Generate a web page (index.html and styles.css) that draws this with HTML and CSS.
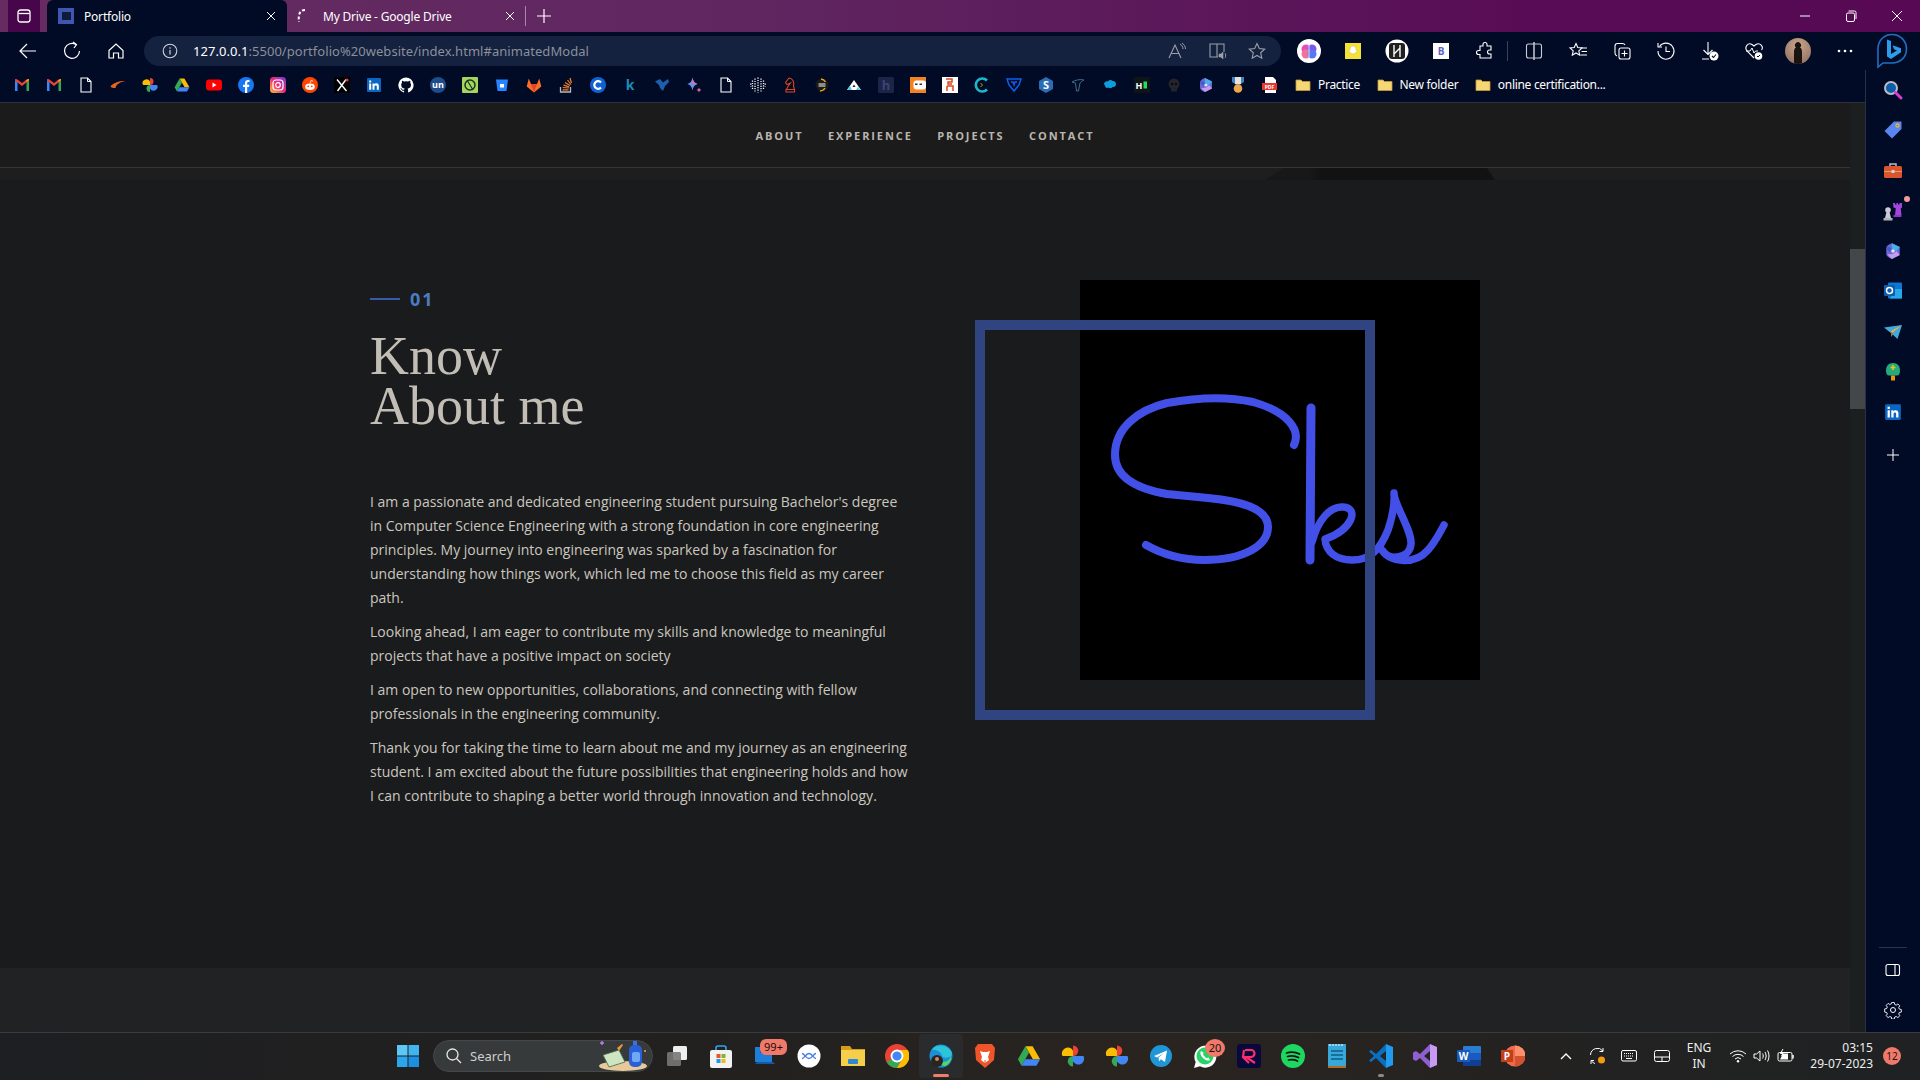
FILE: index.html
```html
<!DOCTYPE html>
<html lang="en">
    <head>
        <title>Portfolio</title>
        <meta charset="UTF-8">
        <meta name="viewport" content="width=device-width, initial-scale=1.0">
        <link rel="stylesheet" href="styles.css">
    </head>
    <body>
        <!-- shared icons -->
        <svg class="defs" width="0" height="0">
            <symbol id="gmail" viewBox="0 0 16 16"><path d="M1 14V3l2.500 2v9z" fill="#4285f4"/><path d="M15 14V3l-2.500 2v9z" fill="#34a853"/><path d="M1 3.500 8 9l7-5.500V2l-2 .2L8 6 3 2.200 1 2z" fill="#ea4335"/><path d="M12.500 5 15 3V2l-2.500 1z" fill="#fbbc04"/></symbol>
            <symbol id="file" viewBox="0 0 16 16"><path d="M3 1h6.500L13 4.500V15H3z" fill="none" stroke="#fff" stroke-width="1.100"/><path d="M9.500 1v3.500H13" fill="none" stroke="#fff"/></symbol>
            <symbol id="pinwheel" viewBox="0 0 16 16"><path d="M8 8H1a3.500 3.500 0 0 1 7-3.500z" fill="#fbbc04"/><path d="M8 8V1a3.500 3.500 0 0 1 3.500 3.500 3.500 3.500 0 0 1-3.500 3.500z" fill="#ea4335"/><path d="M8 8h7a3.500 3.500 0 0 1-7 3.500z" fill="#4285f4"/><path d="M8 8v7a3.500 3.500 0 0 1-3.500-3.500A3.500 3.500 0 0 1 8 8z" fill="#34a853"/></symbol>
            <symbol id="drive" viewBox="0 0 16 16"><path d="M5.600 1.500h4.800l5 8.700h-4.800z" fill="#fbbc04"/><path d="M5.600 1.500 .6 10.200 3 14.500l5-8.700z" fill="#34a853"/><path d="M3 14.500h10l2.400-4.300H5.500z" fill="#4285f4"/></symbol>
            <symbol id="linkedin" viewBox="0 0 16 16"><rect x="1" y="1" width="14" height="14" rx="1" fill="#0a66c2"/><path d="M3.200 6.500h2v6.300h-2zM3.200 3.400h2v2h-2zM6.500 6.500h1.900v.9c.9-1.500 4.400-1.700 4.400 1.500v3.900h-2V9.500c0-1.500-2.300-1.400-2.300.2v3.100h-2z" fill="#fff"/></symbol>
            <symbol id="hex365" viewBox="0 0 16 16"><path d="M7 1c-3 1-5 2.500-5 4.500v5c0 2 2 3.500 5 4.500l7-3.500V4.500z" fill="#6d66d8"/><path d="M7 1 14 4.500 11 8 7 6z" fill="#46b0ea"/><path d="M3 11c3 0 6 0 8-3l3 3.500L7 15z" fill="#c69be8"/><path d="M2 5.500C3 4 5 4 7 6L5 9z" fill="#3b5fc8"/><circle cx="8" cy="8" r="1.600" fill="#dfe3f8"/></symbol>
            <symbol id="folder" viewBox="0 0 16 16"><path d="M1 13.500V3h5l1.500 1.500H15v9z" fill="#f6d776" stroke="#c99a2e" stroke-width=".8"/></symbol>
            <symbol id="close" viewBox="0 0 12 12"><path d="M2 2l8 8M10 2l-8 8" stroke="#fff" stroke-width="1" fill="none"/></symbol>
        </svg>

        <div class="tabstrip">
            <div class="tab-menu"><svg width="16" height="16" viewBox="0 0 16 16"><rect x="2" y="2" width="12" height="12" rx="2.500" fill="none" stroke="#fff" stroke-width="1.300"/><path d="M2.500 5.500h11" stroke="#fff" stroke-width="1.300"/></svg></div>
            <div class="tab tab-active">
                <span class="favicon-square"></span>
                <span class="tab-title">Portfolio</span>
                <svg class="tab-close" width="12" height="12"><use href="#close"/></svg>
            </div>
            <div class="tab tab-other">
                <svg class="tab-spinner" width="16" height="16" viewBox="0 0 16 16"><path d="M13 2C8 2 6 6 7 14" fill="none" stroke="#fff" stroke-width="2" stroke-dasharray="3 2"/></svg>
                <span class="tab-title">My Drive - Google Drive</span>
                <svg class="tab-close" width="12" height="12"><use href="#close"/></svg>
            </div>
            <span class="tab-sep"></span>
            <svg class="tab-new" width="16" height="16" viewBox="0 0 16 16"><path d="M8 1v14M1 8h14" stroke="#fff" stroke-width="1.200"/></svg>
            <div class="win-controls">
                <svg width="46" height="16" viewBox="0 0 46 16"><path d="M18 8h10" stroke="#fff"/></svg>
                <svg width="46" height="16" viewBox="0 0 46 16"><rect x="18.500" y="5" width="8" height="8.500" rx="1.500" fill="none" stroke="#fff"/><path d="M20.500 3h6a1.500 1.500 0 0 1 1.500 1.500V11" fill="none" stroke="#fff"/></svg>
                <svg width="46" height="16" viewBox="0 0 46 16"><path d="M18 3l10 10M28 3 18 13" stroke="#fff"/></svg>
            </div>
        </div>

        <div class="toolbar">
            <div class="nav-btns">
                <svg width="44" height="20" viewBox="0 0 44 20"><path d="M14 10h16M21 3l-7 7 7 7" fill="none" stroke="#fff" stroke-width="1.200"/></svg>
                <svg width="44" height="20" viewBox="0 0 44 20"><path d="M26 3.500A7.500 7.500 0 1 0 29.500 10" fill="none" stroke="#fff" stroke-width="1.200"/><path d="M23 1l3.500 2.700L24 7" fill="none" stroke="#fff" stroke-width="1.200"/></svg>
                <svg width="44" height="20" viewBox="0 0 44 20"><path d="M15 9.500 22 3l7 6.500V17h-4.500v-5h-5v5H15z" fill="none" stroke="#fff" stroke-width="1.200"/></svg>
            </div>
            <div class="addressbar">
                <svg class="addr-info" width="16" height="16" viewBox="0 0 16 16"><circle cx="8" cy="8" r="6.800" fill="none" stroke="#cfd3da" stroke-width="1.100"/><path d="M8 7v4.500M8 4.300v1.400" stroke="#cfd3da" stroke-width="1.200"/></svg>
                <span class="addr-url"><span class="addr-host">127.0.0.1</span>:5500/portfolio%20website/index.html#animatedModal</span>
                <svg class="addr-tool" width="40" height="20" viewBox="0 0 40 20"><path d="M12 17 18 4l6 13M14.200 12.500h7.600" fill="none" stroke="#9aa0aa" stroke-width="1.100"/><path d="M23 3c2 1 3 3 3 5M25 2c2 1.500 3.500 3.500 3.500 6" fill="none" stroke="#9aa0aa"/></svg>
                <svg class="addr-tool" width="40" height="20" viewBox="0 0 40 20"><path d="M20 3h-7v13h7V3h7v8M20 16h1" fill="none" stroke="#9aa0aa" stroke-width="1.100"/><path d="M22 13h2l2-2v7l-2-2h-2zM28 12c1 1.500 1 3 0 5" fill="#9aa0aa" stroke="#9aa0aa" stroke-width=".6"/></svg>
                <svg class="addr-tool" width="40" height="20" viewBox="0 0 40 20"><path d="M20 2.500l2.300 5 5.400.6-4 3.700 1.100 5.400-4.800-2.800-4.800 2.800 1.100-5.400-4-3.700 5.400-.6z" fill="none" stroke="#9aa0aa" stroke-width="1.100"/></svg>
            </div>
            <div class="ext-btns">
                <span class="ext"><svg width="26" height="26" viewBox="0 0 26 26"><circle cx="13" cy="13" r="12" fill="#fff"/><circle cx="10" cy="11" r="4.500" fill="#e44fb3"/><circle cx="16" cy="11" r="4.500" fill="#7a5be8"/><circle cx="10" cy="16" r="4.500" fill="#f0739c"/><circle cx="16" cy="16" r="4.500" fill="#5a78f0"/><path d="M13 6v14" stroke="#fff" stroke-width=".8"/></svg></span>
                <span class="ext"><svg width="16" height="16" viewBox="0 0 16 16"><rect width="16" height="16" fill="#f4e23a"/><path d="M8 3c2.200 0 3 1.700 3 3.500 0 1 1 1.200 1.500 1.500-.5 1-1.800.8-2 1.800-1 1.500-4 1.500-5 0-.2-1-1.500-.8-2-1.800C4 7.700 5 7.500 5 6.500 5 4.700 5.800 3 8 3z" fill="#fff" stroke="#c9b73a" stroke-width=".5"/></svg></span>
                <span class="ext"><svg width="24" height="24" viewBox="0 0 24 24"><circle cx="12" cy="12" r="11.500" fill="#fff"/><rect x="4" y="4" width="16" height="16" rx="3" fill="#202020"/><path d="M9 6v12M15 6v12M9 15l6-6" stroke="#fff" stroke-width="1.400"/></svg></span>
                <span class="ext"><svg width="16" height="16" viewBox="0 0 16 16"><rect width="16" height="16" fill="#fff"/><text x="8" y="12" class="ext-b">B</text></svg></span>
                <span class="ext"><svg width="20" height="20" viewBox="0 0 20 20"><path d="M8 3.500a2 2 0 1 1 4 0V5h4v4h-1.500a2 2 0 1 0 0 4H16v4H5v-3.500H3.500a2 2 0 1 1 0-4H5V5h3z" fill="none" stroke="#fff" stroke-width="1.100"/></svg></span>
                <span class="toolbar-sep"></span>
                <span class="ext"><svg width="20" height="20" viewBox="0 0 20 20"><rect x="2.500" y="3" width="15" height="14" rx="2" fill="none" stroke="#c9ccd2" stroke-width="1.100"/><path d="M10 1v18" stroke="#c9ccd2" stroke-width="1.500"/></svg></span>
                <span class="ext"><svg width="20" height="20" viewBox="0 0 20 20"><path d="M8 2.500l1.800 4 4.200.4-3.200 3 .9 4.300L8 12l-3.700 2.200.9-4.300L2 6.900l4.200-.4z" fill="none" stroke="#fff" stroke-width="1.100"/><path d="M13 7h6M13.500 10.500H19M12.500 14H19" stroke="#fff" stroke-width="1.100"/></svg></span>
                <span class="ext"><svg width="20" height="20" viewBox="0 0 20 20"><rect x="7" y="7" width="11" height="11" rx="2" fill="none" stroke="#fff" stroke-width="1.100"/><path d="M12.500 9.500v6M9.500 12.500h6M5 15c-1.500-.5-2-1.500-2-3V5c0-1.500 1-2.500 2.500-2.500h5c1.200 0 2 .5 2.500 1.500" fill="none" stroke="#fff" stroke-width="1.100"/></svg></span>
                <span class="ext"><svg width="20" height="20" viewBox="0 0 20 20"><path d="M3.500 5.500A8 8 0 1 1 2 10" fill="none" stroke="#fff" stroke-width="1.100"/><path d="M2 2v4h4M10 5.500V10.500H14" fill="none" stroke="#fff" stroke-width="1.100"/></svg></span>
                <span class="ext"><svg width="20" height="20" viewBox="0 0 20 20"><path d="M8 1v12M3.500 9 8 13.500 12.500 9M2 18h7" fill="none" stroke="#fff" stroke-width="1.100"/><circle cx="14" cy="15" r="4.500" fill="#fff"/><path d="M12 15l1.500 1.500L16 13.500" fill="none" stroke="#03102c" stroke-width="1.100"/></svg></span>
                <span class="ext"><svg width="20" height="20" viewBox="0 0 20 20"><path d="M10 17 3 10C0 6 4 1 8 3.500l2 1.500 2-1.500C16 1 20 6 17.500 9" fill="none" stroke="#fff" stroke-width="1.100"/><path d="M2 10h4l2-3 2 5 1.500-2H14" fill="none" stroke="#fff"/><circle cx="14.500" cy="15" r="3.800" fill="#fff"/><path d="M13 15l1 1 2-2" fill="none" stroke="#03102c"/></svg></span>
                <span class="ext"><span class="avatar"><svg width="26" height="26" viewBox="0 0 26 26"><path d="M9 26V14c0-3 1-4 2-4.500a3 3 0 1 1 4 0c1 .5 2 1.500 2 4.500v12z" fill="#1a1410"/></svg></span></span>
                <span class="ext ext-dots"><svg width="20" height="20" viewBox="0 0 20 20"><circle cx="4" cy="10" r="1.300" fill="#fff"/><circle cx="10" cy="10" r="1.300" fill="#fff"/><circle cx="16" cy="10" r="1.300" fill="#fff"/></svg></span>
            </div>
            <div class="bing-btn"><svg width="32" height="36" viewBox="0 0 32 36"><path d="M16 1.500c8 0 14.500 6 14.500 14.500S24 30 16 30H7l-5 4V16C2 7.500 8 1.500 16 1.500z" fill="none" stroke="#1f6fc4" stroke-width="1.600"/><path d="M11 6.500l4 1.500v13l6-3.500-3-1.300-1.500-4 8.500 3v4L15 26l-4-2.500z" fill="#2c9be8"/></svg></div>
        </div>

        <div class="workspace">
            <div class="main-col">
                <div class="bookmarks">
                    <span class="bm"><svg><use href="#gmail"/></svg></span>
                    <span class="bm"><svg><use href="#gmail"/></svg></span>
                    <span class="bm"><svg><use href="#file"/></svg></span>
                    <span class="bm"><svg viewBox="0 0 16 16"><path d="M.5 9C5 5 10 3.500 15.500 4 10 5 6.500 7 5.500 11 3.500 11 1 11 .5 9z" fill="#e8641b"/></svg></span>
                    <span class="bm"><svg><use href="#pinwheel"/></svg></span>
                    <span class="bm"><svg><use href="#drive"/></svg></span>
                    <span class="bm"><svg viewBox="0 0 16 16"><rect y="2.500" width="16" height="11" rx="3" fill="#f00"/><path d="M6.500 5.500v5l4-2.500z" fill="#fff"/></svg></span>
                    <span class="bm"><svg viewBox="0 0 16 16"><circle cx="8" cy="8" r="8" fill="#1877f2"/><path d="M7 16v-6H5V7.700h2V6c0-2 1.200-3 3-3l1.500.1v2h-1c-1 0-1.300.5-1.300 1.200v1.400h2.200L11 10H9.200v6z" fill="#fff"/></svg></span>
                    <span class="bm"><svg viewBox="0 0 16 16"><defs><linearGradient id="ig" x1="0" y1="1" x2="1" y2="0"><stop offset="0" stop-color="#fdc42f"/><stop offset=".5" stop-color="#ee2a7b"/><stop offset="1" stop-color="#6a3fd8"/></linearGradient></defs><rect width="16" height="16" rx="3.500" fill="url(#ig)"/><rect x="3" y="3" width="10" height="10" rx="3" fill="none" stroke="#fff" stroke-width="1.200"/><circle cx="8" cy="8" r="2.300" fill="none" stroke="#fff" stroke-width="1.200"/></svg></span>
                    <span class="bm"><svg viewBox="0 0 16 16"><circle cx="8" cy="8" r="8" fill="#ff4500"/><ellipse cx="8" cy="9.800" rx="4.800" ry="3.200" fill="#fff"/><circle cx="6.200" cy="9.300" r=".9" fill="#ff4500"/><circle cx="9.800" cy="9.300" r=".9" fill="#ff4500"/><path d="M8 6.500 9 3.500l2 .5" fill="none" stroke="#fff" stroke-width=".7"/></svg></span>
                    <span class="bm"><svg viewBox="0 0 16 16"><rect width="16" height="16" fill="#000"/><path d="M3 2.500 12.500 14M12 2.500 3.500 14" stroke="#fff" stroke-width="1.400"/><circle cx="13" cy="3" r="1.600" fill="#e33"/></svg></span>
                    <span class="bm"><svg><use href="#linkedin"/></svg></span>
                    <span class="bm"><svg viewBox="0 0 16 16"><path d="M8 .5a7.700 7.700 0 0 0-2.400 15c.4 0 .5-.2.5-.4v-1.400c-2.100.5-2.600-1-2.600-1-.3-.9-.8-1.100-.8-1.100-.7-.5 0-.5 0-.5.8 0 1.200.8 1.200.8.7 1.200 1.800.8 2.300.6 0-.5.3-.8.5-1-1.700-.2-3.500-.9-3.500-3.800 0-.8.3-1.500.8-2-.1-.2-.3-1 .1-2 0 0 .6-.2 2.100.8a7 7 0 0 1 3.800 0c1.500-1 2.100-.8 2.100-.8.4 1 .2 1.800.1 2 .5.5.8 1.200.8 2 0 2.900-1.800 3.600-3.500 3.800.3.200.6.700.6 1.400v2.100c0 .2.100.4.500.4A7.700 7.700 0 0 0 8 .5z" fill="#fff"/></svg></span>
                    <span class="bm"><svg viewBox="0 0 16 16"><circle cx="8" cy="8" r="8" fill="#1d4e89"/><text x="8" y="11" class="bm-txt bm-un">un</text></svg></span>
                    <span class="bm"><svg viewBox="0 0 16 16"><rect width="16" height="16" rx="1" fill="#a4d65e"/><circle cx="8" cy="8" r="5" fill="none" stroke="#1c3320" stroke-width="1.500"/><path d="M5 3l6 10" stroke="#1c3320" stroke-width="1.200"/></svg></span>
                    <span class="bm"><svg viewBox="0 0 16 16"><path d="M2 2.500h12L12.500 14h-9z" fill="#2684ff"/><rect x="6" y="7" width="4" height="3.500" fill="#fff"/></svg></span>
                    <span class="bm"><svg viewBox="0 0 16 16"><path d="M8 15.500 .7 9.500 2.800 1.500 5 7h6l2.200-5.500 2.100 8z" fill="#fc6d26"/><path d="M8 15.500 5 7h6z" fill="#e24329"/></svg></span>
                    <span class="bm"><svg viewBox="0 0 16 16"><path d="M2.500 10v5h10v-5" fill="none" stroke="#bcbbbb" stroke-width="1.300"/><path d="M4.500 12.800h6M4.700 10.500l6 .5M5.500 8.200l5.700 1.600M7 5.500l5 3M9.500 3l3.500 4.500M12 1l1.500 5" stroke="#f48024" stroke-width="1.200"/></svg></span>
                    <span class="bm"><svg viewBox="0 0 16 16"><circle cx="8" cy="8" r="8" fill="#0f62d6"/><path d="M11 5.500a3.800 3.800 0 1 0 0 5" fill="none" stroke="#fff" stroke-width="2.200"/></svg></span>
                    <span class="bm"><svg viewBox="0 0 16 16"><text x="8" y="12.500" class="bm-txt bm-k">k</text></svg></span>
                    <span class="bm"><svg viewBox="0 0 16 16"><path d="M1 4.500 6 2l3 3.500L14 2l1 3-4 4-2 5-3-3-1-3z" fill="#1b5fae"/></svg></span>
                    <span class="bm"><svg viewBox="0 0 16 16"><path d="M6.500 .5C7 4 8.500 6 11.500 7 8.500 8 7 10 6.500 13.500 6 10 4.500 8 1.500 7 4.500 6 6 4 6.500 .5z" fill="#6f8fe8"/><path d="M6.500 .5C7 4 8.500 6 11.500 7H6.500z" fill="#df6fb0"/><path d="M13 10.500l.8 1.700 1.700.8-1.700.8-.8 1.700-.8-1.700-1.700-.8 1.700-.8z" fill="#df6fb0"/></svg></span>
                    <span class="bm"><svg><use href="#file"/></svg></span>
                    <span class="bm"><svg viewBox="0 0 16 16"><path d="M8 .5v15M5 1.500v13M11 1.500v13M2.500 3.500v9M13.500 3.500v9M.8 6.500v3M15.200 6.500v3" stroke="#fff" stroke-width="1.300" stroke-dasharray="1.200 1.200" fill="none"/></svg></span>
                    <span class="bm"><svg viewBox="0 0 16 16"><path d="M7 1c4 .5 5.500 4 4.500 8l1 3.500h-8l1.500-3L8.500 6 5 7.500 3.500 5.500zM4 12.500h8.500V15H4z" fill="none" stroke="#d8481f" stroke-width="1.100"/></svg></span>
                    <span class="bm"><svg viewBox="0 0 16 16"><circle cx="8" cy="8" r="6.500" fill="#1a1a1a"/><path d="M7 2a6 6 0 0 1 4.500 3M11 11a6 6 0 0 1-5 3" fill="none" stroke="#e8a317" stroke-width="1.500"/><path d="M4.500 7h7M4.500 9h7" stroke="#fff"/></svg></span>
                    <span class="bm"><svg viewBox="0 0 16 16"><path d="M8 3 15 13H1z" fill="#fff"/><path d="M1 13l3-4.300L6 13zM10 13l2-3 3 3z" fill="#5ac8e0"/><path d="M6.500 10h3l-1.500-2.500z" fill="#182038"/></svg></span>
                    <span class="bm"><svg viewBox="0 0 16 16"><rect width="16" height="16" rx="1.500" fill="#1c2447"/><text x="8" y="12.500" class="bm-txt bm-h">h</text></svg></span>
                    <span class="bm"><svg viewBox="0 0 16 16"><rect width="16" height="16" fill="#f58220"/><rect x="3.500" y="3.500" width="12.500" height="9" rx="3" fill="#fff"/><rect x="5" y="6.500" width="2.500" height="1.500" fill="#333"/><rect x="9.500" y="6.500" width="2.500" height="1.500" fill="#333"/></svg></span>
                    <span class="bm"><svg viewBox="0 0 16 16"><rect width="16" height="16" fill="#fff"/><path d="M4 2h6v3H6v2h4M5 9h6v5M5 14V9" fill="none" stroke="#d8481f" stroke-width="1.500"/></svg></span>
                    <span class="bm"><svg viewBox="0 0 16 16"><path d="M13 3.500a6.500 6.500 0 1 0 0 9" fill="none" stroke="#1bb8c9" stroke-width="2.600"/><path d="M6.500 6 8.500 8l-2 2" fill="none" stroke="#e8a317" stroke-width=".9"/></svg></span>
                    <span class="bm"><svg viewBox="0 0 16 16"><path d="M1 2h14l-2 6-5 6-5-6zM5 5h2l1 3 1-3h2" fill="none" stroke="#0d5ff2" stroke-width="1.500"/></svg></span>
                    <span class="bm"><svg viewBox="0 0 16 16"><path d="M8 0 15 4v8l-7 4-7-4V4z" fill="#2a6db5"/><text x="8" y="12" class="bm-txt bm-s">S</text></svg></span>
                    <span class="bm"><svg viewBox="0 0 16 16"><path d="M2 5c3-2 8-3 12-2-2 1-3 2-4 3l-1.500 8h-2L5.500 6z" fill="none" stroke="#3d6f8f" stroke-width="1"/></svg></span>
                    <span class="bm"><svg viewBox="0 0 16 16"><path d="M6 4.500c1-2 3.500-2 4.500-.5 1.800-.5 3.500 1 3.500 3s-1.500 3.500-3.500 3c-1 1.500-3 1.500-4 .5-1.500 1-3.500 0-3.500-2-1.500-1-1-3 .3-3.500C4 4 5 4 6 4.500z" fill="#0d9dda"/></svg></span>
                    <span class="bm"><svg viewBox="0 0 16 16"><rect width="16" height="16" fill="#101418"/><text x="5" y="12" class="bm-txt bm-hh">H</text><rect x="9.500" y="4.500" width="3.500" height="7" fill="#1ee05f"/></svg></span>
                    <span class="bm"><svg viewBox="0 0 16 16"><circle cx="8" cy="7" r="5.500" fill="#23252b"/><circle cx="6" cy="7" r="1.300" fill="#0a0c12"/><circle cx="10" cy="7" r="1.300" fill="#0a0c12"/><rect x="5" y="11" width="6" height="3.500" fill="#23252b"/></svg></span>
                    <span class="bm"><svg><use href="#hex365"/></svg></span>
                    <span class="bm"><svg viewBox="0 0 16 16"><path d="M2 0h12v5L8 9 2 5z" fill="#3f7fc4"/><path d="M5 0h6v7H5z" fill="#e9e4d4"/><circle cx="8" cy="11.500" r="4.300" fill="#f0a64a"/></svg></span>
                    <span class="bm"><svg viewBox="0 0 16 16"><path d="M3 0h8l3 3v13H3z" fill="#fff"/><rect x="0" y="6" width="15" height="7" fill="#e8352e"/><text x="7.500" y="11.500" class="bm-txt bm-pdf">PDF</text></svg></span>
                    <span class="folder-item folder-first"><svg width="16" height="16"><use href="#folder"/></svg>Practice</span>
                    <span class="folder-item"><svg width="16" height="16"><use href="#folder"/></svg>New folder</span>
                    <span class="folder-item"><svg width="16" height="16"><use href="#folder"/></svg>online certification...</span>
                </div>

                <div class="viewport">
                    <div class="page">
                        <nav class="site-nav">
                            <a href="#about">ABOUT</a>
                            <a href="#experience">EXPERIENCE</a>
                            <a href="#projects">PROJECTS</a>
                            <a href="#contact">CONTACT</a>
                        </nav>
                        <div class="hero-edge"><div class="hero-shape"></div></div>
                        <section class="about" id="about">
                            <div class="about-text">
                                <div class="section-num"><span class="section-dash"></span>01</div>
                                <h2>Know<br>About me</h2>
                                <p>I am a passionate and dedicated engineering student pursuing Bachelor's degree in Computer Science Engineering with a strong foundation in core engineering principles. My journey into engineering was sparked by a fascination for understanding how things work, which led me to choose this field as my career path.</p>
                                <p>Looking ahead, I am eager to contribute my skills and knowledge to meaningful projects that have a positive impact on society</p>
                                <p>I am open to new opportunities, collaborations, and connecting with fellow professionals in the engineering community.</p>
                                <p>Thank you for taking the time to learn about me and my journey as an engineering student. I am excited about the future possibilities that engineering holds and how I can contribute to shaping a better world through innovation and technology.</p>
                            </div>
                            <div class="about-pic">
                                <svg class="logo" width="400" height="400" viewBox="0 0 400 400"><path d="M214 165C221 150 208 132 173 122 150 117 120 117 87 123 58 130 35 148 35 175 35 198 58 209 87 214L128 218C160 221 188 228 188 247 188 265 165 280 124 280 100 280 82 274 66 265" fill="none" stroke="#4350e8" stroke-width="8" stroke-linecap="round"/><path d="M231 128 230 280" fill="none" stroke="#4350e8" stroke-width="9" stroke-linecap="round"/><path d="M232 262C238 240 250 226 263 227 280 228 272 250 245 259 246 272 256 280 272 280 290 280 300 270 308 250 312 238 315 225 314 213 314 225 332 250 331 264 330 278 310 282 302 270 310 283 335 285 348 270 356 261 360 252 364 245" fill="none" stroke="#4350e8" stroke-width="7.500" stroke-linecap="round" stroke-linejoin="round"/></svg>
                                <div class="about-frame"></div>
                            </div>
                        </section>
                        <div class="page-rest"></div>
                    </div>
                    <div class="scrollbar"><div class="scroll-thumb"></div></div>
                </div>
            </div>

            <aside class="sidebar">
                <span class="side-btn"><svg width="20" height="20" viewBox="0 0 20 20"><circle cx="8" cy="8" r="6" fill="#0b5cab" stroke="#b9bdc4" stroke-width="2"/><path d="M12.500 12.500 18 18" stroke="#d63bd8" stroke-width="3" stroke-linecap="round"/></svg></span>
                <span class="side-btn"><svg width="20" height="20" viewBox="0 0 20 20"><path d="M11 1.500h7.500V9L9 18.500 1.500 11z" fill="#5a84f0"/><circle cx="14.500" cy="5.500" r="1.600" fill="none" stroke="#f5c518" stroke-width="1.100"/></svg></span>
                <span class="side-btn"><svg width="20" height="20" viewBox="0 0 20 20"><path d="M7 5V3h6v2" fill="none" stroke="#b9bdc4" stroke-width="1.500"/><rect x="1" y="5" width="18" height="12" rx="1.500" fill="#d8552d"/><path d="M1 10.500h18" stroke="#f0976a"/><rect x="8.500" y="9" width="3" height="3" fill="#cfd3da"/></svg></span>
                <span class="side-btn side-chess"><svg width="22" height="20" viewBox="0 0 22 20"><circle cx="6" cy="9" r="2.800" fill="#c9ccd2"/><path d="M4.500 11h3L9 17H3z" fill="#c9ccd2"/><path d="M1.500 17h9v2.500h-9z" fill="#aeb2ba"/><path d="M11 2h2v1.500h1.500V2h1.500v1.500h1.500V2H20v4.500l-1.300.8.800 6.700h-6.500l.8-6.700L11.500 6.500z" fill="#a644e0"/><path d="M11.500 14h8v2h-8z" fill="#8d35c8"/></svg><span class="side-dot"></span></span>
                <span class="side-btn"><svg width="18" height="18"><use href="#hex365"/></svg></span>
                <span class="side-btn"><svg width="20" height="20" viewBox="0 0 20 20"><rect x="5" y="1.500" width="14" height="16" rx="1" fill="#0a78d4"/><path d="M12 8h7v9.500h-12z" fill="#28a8ea"/><rect x="1" y="4" width="11" height="11" rx="1" fill="#0f5cab"/><circle cx="6.500" cy="9.500" r="3" fill="none" stroke="#fff" stroke-width="1.500"/></svg></span>
                <span class="side-btn"><svg width="20" height="20" viewBox="0 0 20 20"><path d="M1 5.500 19 3 14.500 17 8.500 11.500z" fill="#41a9e0"/><path d="M8.500 11.500 19 3 8 9z" fill="#f2b33a"/><path d="M8 9v6l2-2.500z" fill="#b8761c"/></svg></span>
                <span class="side-btn"><svg width="20" height="20" viewBox="0 0 20 20"><path d="M10 1c4.500 0 7 3 7 7.500 0 3-1 5-3 5H6c-2 0-3-2-3-5C3 4 5.500 1 10 1z" fill="#24ab7b"/><rect x="8" y="13.500" width="4" height="5" fill="#e8950f"/><path d="M10 3v5M7.500 5.500h5" stroke="#f0bf1a" stroke-width="1.600"/></svg></span>
                <span class="side-btn"><svg width="18" height="18"><use href="#linkedin"/></svg></span>
                <span class="side-btn side-plus"><svg width="14" height="14" viewBox="0 0 14 14"><path d="M7 1v12M1 7h12" stroke="#fff" stroke-width="1"/></svg></span>
                <div class="side-bottom">
                    <span class="side-rule"></span>
                    <span class="side-btn"><svg width="16" height="14" viewBox="0 0 16 14"><rect x="1" y="1.500" width="13.500" height="11" rx="2" fill="none" stroke="#fff" stroke-width="1.100"/><path d="M10 1.500v11" stroke="#fff" stroke-width="1.100"/></svg></span>
                    <span class="side-btn"><svg width="18" height="18" viewBox="0 0 18 18"><circle cx="9" cy="9" r="2.500" fill="none" stroke="#fff"/><path d="M7.700 1.500h2.600l.4 2 1.500.6 1.700-1.100 1.900 1.900-1.100 1.700.6 1.500 2 .4v2.600l-2 .4-.6 1.500 1.100 1.700-1.900 1.900-1.700-1.100-1.500.6-.4 2H7.700l-.4-2-1.500-.6-1.700 1.100-1.900-1.900 1.100-1.700-.6-1.500-2-.4V7.900l2-.4.6-1.500L2.200 4.300l1.900-1.900 1.700 1.100 1.500-.6z" fill="none" stroke="#fff" stroke-width=".9"/></svg></span>
                </div>
            </aside>
        </div>

        <footer class="taskbar">
            <span class="start"><svg width="24" height="24" viewBox="0 0 24 24"><rect x="1" y="1" width="10.500" height="10.500" fill="#5dc8f5"/><rect x="12.500" y="1" width="10.500" height="10.500" fill="#3fb4f0"/><rect x="1" y="12.500" width="10.500" height="10.500" fill="#2ba6ec"/><rect x="12.500" y="12.500" width="10.500" height="10.500" fill="#1c8fe0"/></svg></span>
            <div class="searchbox">
                <svg width="18" height="18" viewBox="0 0 18 18"><circle cx="7.500" cy="7.500" r="5.500" fill="none" stroke="#e8e8e8" stroke-width="1.300"/><path d="M11.500 11.500 16 16" stroke="#e8e8e8" stroke-width="1.300"/></svg>
                <span class="search-label">Search</span>
                <svg class="search-art" width="50" height="32" viewBox="0 0 50 32"><ellipse cx="24" cy="26" rx="24" ry="5" fill="#e8c99a"/><path d="M4 15l16-5 6 12-16 5z" fill="#cfe4c0" stroke="#3e6a4e" stroke-width=".8"/><path d="M18 8l5-4 1 1-4 6z" fill="#e89a3a"/><rect x="30" y="5" width="13" height="22" rx="5" fill="#2a5fd8"/><rect x="33" y="12" width="8" height="10" rx="2" fill="#6fa8f5"/><rect x="34" y="1" width="4" height="4" fill="#3a72e0"/><circle cx="46" cy="11" r="1" fill="#f0b030"/><path d="M1 3h4M3 1v4" stroke="#c07be0" stroke-width="1.400"/></svg>
            </div>
            <span class="task"><svg width="24" height="24" viewBox="0 0 24 24"><rect x="8" y="2" width="14" height="14" rx="1.500" fill="#eee"/><rect x="2" y="8" width="14" height="14" rx="1.500" fill="#777" opacity=".9"/></svg></span>
            <span class="task"><svg width="24" height="26" viewBox="0 0 24 26"><path d="M7 8V5a2 2 0 0 1 2-2h6a2 2 0 0 1 2 2v3" fill="none" stroke="#2ba6ec" stroke-width="1.600"/><rect x="1" y="7" width="22" height="18" rx="2" fill="#f2f2f2"/><rect x="7.500" y="11" width="4" height="4" fill="#e8552d"/><rect x="12.500" y="11" width="4" height="4" fill="#7cb82f"/><rect x="7.500" y="16" width="4" height="4" fill="#1c9be0"/><rect x="12.500" y="16" width="4" height="4" fill="#f5b81a"/></svg></span>
            <span class="task"><svg width="26" height="24" viewBox="0 0 26 24"><rect x="3" y="3" width="17" height="15" fill="#1f7fd8"/><rect x="8" y="1" width="15" height="8" fill="#1a5fb8"/><path d="M5 18h16l2 2H3z" fill="#1259a8"/></svg><span class="badge badge-wide">99+</span></span>
            <span class="task"><svg width="24" height="24" viewBox="0 0 24 24"><circle cx="12" cy="12" r="11.500" fill="#fff"/><path d="M5 9.500c2.500 0 3.500 5 7 5s4.500-5 7-5M5 14.500c2.500 0 3.500-5 7-5s4.500 5 7 5" fill="none" stroke="#4a7fe0" stroke-width="1.400"/></svg></span>
            <span class="task"><svg width="26" height="24" viewBox="0 0 26 24"><path d="M1 2h9l2 3h13v17H1z" fill="#d89a18"/><rect x="1" y="6" width="24" height="16" fill="#f6cf4a"/><rect x="8" y="15" width="10" height="5" rx="1" fill="#2b88d8"/></svg></span>
            <span class="task"><svg width="24" height="24" viewBox="0 0 24 24"><circle cx="12" cy="12" r="12" fill="#ea4335"/><path d="M12 12 1.600 18A12 12 0 0 0 12 24l5-9z" fill="#34a853"/><path d="M12 6h10.800A12 12 0 0 1 12 24l5.200-9z" fill="#fbbc04"/><circle cx="12" cy="12" r="5.500" fill="#4285f4" stroke="#fff" stroke-width="1.800"/></svg></span>
            <span class="task task-open"><svg width="24" height="24" viewBox="0 0 24 24"><circle cx="12" cy="12" r="11.500" fill="#1c8fd8"/><path d="M3 6c3-6 14-6 19 1 1.500 3 1 6-2 6-2 1-6 1-7-1 0-4-7-7-10-6z" fill="#2bc4d8"/><path d="M22 12c1 5-3 9-6 10-2 0-5-2-4-5 2 1 8 2 10-5z" fill="#52d860"/><circle cx="8" cy="17" r="6" fill="#2a2420"/><circle cx="8" cy="15" r="2" fill="#c98a6a"/></svg><span class="task-pill"></span></span>
            <span class="task"><svg width="22" height="26" viewBox="0 0 22 26"><path d="M4 1h14l3 4-1 12-9 8-9-8L1 5z" fill="#f0542a"/><path d="M6 8l3 1h4l3-1-2 6 1 3-4 3-4-3 1-3z" fill="#fff"/><path d="M11 17v3" stroke="#f0542a"/></svg></span>
            <span class="task"><svg width="24" height="24"><use href="#drive"/></svg></span>
            <span class="task"><svg width="24" height="24"><use href="#pinwheel"/></svg></span>
            <span class="task"><svg width="24" height="24"><use href="#pinwheel"/></svg></span>
            <span class="task"><svg width="24" height="24" viewBox="0 0 24 24"><circle cx="12" cy="12" r="11" fill="#1f96d6"/><path d="M5 12 18 6.500 16 18l-4-2.800-2 2-.5-3.700L15 9l-7 4.500z" fill="#fff"/></svg></span>
            <span class="task"><svg width="26" height="26" viewBox="0 0 26 26"><path d="M2 25l1.700-6A11 11 0 1 1 8 23.300z" fill="#fff"/><circle cx="13" cy="13" r="8.500" fill="#25d366"/><path d="M9 8c-1.500 2 0 5 2 7s5 3.500 7 2l-1.500-2.500-2 .7-3.500-3.500.7-2z" fill="#fff"/></svg><span class="badge badge-num">20</span></span>
            <span class="task"><svg width="24" height="24" viewBox="0 0 24 24"><rect width="24" height="24" rx="3" fill="#08083a"/><path d="M8 6h6a3 3 0 0 1 0 7H9l9 6M7 6l-1 7 6 6" fill="none" stroke="#fa2d6e" stroke-width="2.200"/></svg></span>
            <span class="task"><svg width="24" height="24" viewBox="0 0 24 24"><circle cx="12" cy="12" r="12" fill="#1ed760"/><path d="M5.500 9c4-1.200 9-1 13 1M6.500 12.500c3.500-1 7.500-.8 11 1M7.500 16c3-.7 6-.5 9 1" fill="none" stroke="#111" stroke-width="1.700" stroke-linecap="round"/></svg></span>
            <span class="task"><svg width="20" height="26" viewBox="0 0 20 26"><rect x="1" y="1" width="18" height="24" fill="#38a8d8"/><rect x="1" y="23" width="18" height="2" fill="#b06a2a"/><path d="M4 8h12M4 12h12M4 16h12" stroke="#0d5c8a" stroke-width="1.500"/><path d="M3 1v2M6 1v2M9 1v2M12 1v2M15 1v2" stroke="#fff"/></svg></span>
            <span class="task task-run"><svg width="24" height="26" viewBox="0 0 24 26"><path d="M17 1 24 4v18l-7 3z" fill="#1f9cf0"/><path d="M17 1 7 11 2 7 0 8.500 5 13 0 17.500 2 19l5-4 10 10v-7l-6-5 6-5z" fill="#0a6fc0"/></svg><span class="task-dot"></span></span>
            <span class="task"><svg width="24" height="26" viewBox="0 0 24 26"><path d="M17 1 24 4v18l-7 3z" fill="#c79bf2"/><path d="M17 1 7 11 3 8 0 9.500v7L3 18l4-3 10 10v-7l-6-5 6-5z" fill="#8f5ed0"/></svg></span>
            <span class="task"><svg width="24" height="24" viewBox="0 0 24 24"><rect x="6" y="2" width="18" height="20" rx="1" fill="#2b7cd3"/><path d="M6 9h18v7H6z" fill="#185abd"/><rect x="6" y="16" width="18" height="6" fill="#103f91"/><rect y="6" width="13" height="12" fill="#185abd"/><text x="6.500" y="15.500" class="office-letter">W</text></svg></span>
            <span class="task"><svg width="24" height="24" viewBox="0 0 24 24"><circle cx="14" cy="12" r="10.500" fill="#ed6c47"/><path d="M14 1.500V12h10.500A10.500 10.500 0 0 0 14 1.500z" fill="#ff8f6b"/><path d="M14 12h10.500A10.500 10.500 0 0 1 14 22.500z" fill="#d35230"/><rect y="6" width="12" height="12" fill="#c43e1c"/><text x="6" y="15.500" class="office-letter">P</text></svg></span>

            <div class="tray">
                <span class="tray-btn"><svg width="14" height="10" viewBox="0 0 14 10"><path d="M2 8l5-5 5 5" fill="none" stroke="#fff" stroke-width="1.400"/></svg></span>
                <span class="tray-btn"><svg width="18" height="18" viewBox="0 0 18 18"><path d="M1.500 8A7 7 0 0 1 14 4M14 1v3.500h-3.500M6 16.500A7 7 0 0 1 2.500 14M2 17v-3.500h3" fill="none" stroke="#fff" stroke-width="1"/><circle cx="12.500" cy="13" r="3.500" fill="#f59a0c"/></svg></span>
                <span class="tray-btn"><svg width="18" height="12" viewBox="0 0 18 12"><rect x=".5" y=".5" width="15" height="10.500" rx="1.500" fill="none" stroke="#fff"/><path d="M3 3.500h10M3 6h10" stroke="#fff" stroke-dasharray="1 1"/><path d="M5 8.500h6" stroke="#fff"/></svg></span>
                <span class="tray-btn"><svg width="16" height="14" viewBox="0 0 16 14"><rect x=".5" y="1.500" width="15" height="11" rx="2" fill="none" stroke="#fff"/><path d="M.5 8h15M8 8v4.500" stroke="#fff"/></svg></span>
                <span class="tray-lang">ENG<br>IN</span>
                <span class="tray-sys"><svg width="18" height="14" viewBox="0 0 18 14"><path d="M1 5a11.500 11.500 0 0 1 16 0M3.500 7.500a8 8 0 0 1 11 0M6 10a4.300 4.300 0 0 1 6 0" fill="none" stroke="#fff" stroke-width="1"/><circle cx="9" cy="12.300" r="1.200" fill="#fff"/></svg></span>
                <span class="tray-sys"><svg width="18" height="14" viewBox="0 0 18 14"><path d="M1 5h2.500L7 2v10L3.500 9H1z" fill="none" stroke="#fff"/><path d="M9.500 4.500c1 1.500 1 3.500 0 5M12 3c1.500 2.500 1.500 5.500 0 8M14.500 1.500c2 3 2 8 0 11" fill="none" stroke="#fff"/></svg></span>
                <span class="tray-sys"><svg width="18" height="14" viewBox="0 0 18 14"><rect x="1" y="3.500" width="14" height="8.500" rx="1.500" fill="none" stroke="#fff"/><path d="M16 6v3.500" stroke="#fff" stroke-width="1.500"/><path d="M3 10.500 6 4.500l5 0v6z" fill="#fff"/><path d="M6 0 3.500 4.500H6L4.500 7" fill="none" stroke="#fff"/></svg></span>
                <span class="tray-clock">03:15<br>29-07-2023</span>
                <span class="tray-notif">12</span>
            </div>
        </footer>
    </body>
</html>
```

FILE: styles.css
```css
html, body {
    margin: 0;
    padding: 0;
    height: 100%;
}
body {
    width: 1920px;
    height: 1080px;
    overflow: hidden;
    display: flex;
    flex-direction: column;
    background-color: #1b1c1e;
    font-family: "Noto Sans", "Open Sans", sans-serif;
    color: #fff;
}
.defs {
    position: absolute;
}

/* tab strip */
.tabstrip {
    height: 32px;
    flex: none;
    display: flex;
    align-items: center;
    background: linear-gradient(90deg, #662c62 0%, #5f2660 40%, #580c55 80%, #570954 100%);
}
.tab-menu {
    width: 32px;
    height: 32px;
    margin: 0 7px 0 8px;
    flex: none;
    display: flex;
    align-items: center;
    justify-content: center;
    background-color: #47064b;
}
.tab {
    height: 32px;
    display: flex;
    align-items: center;
    flex: none;
    box-sizing: border-box;
    font-size: 12px;
}
.tab-active {
    width: 240px;
    padding: 0 10px 0 11px;
    background-color: #020b26;
    border-radius: 6px 6px 0 0;
}
.tab-other {
    width: 238px;
    padding: 0 9px 0 5px;
}
.favicon-square {
    width: 16px;
    height: 16px;
    box-sizing: border-box;
    border: 4px solid #3f57b0;
    border-right-width: 3px;
    background-color: #101a3c;
}
.tab-spinner {
    flex: none;
}
.tab-title {
    flex: 1;
    margin-left: 10px;
    letter-spacing: -0.2px;
    white-space: nowrap;
}
.tab-other .tab-title {
    margin-left: 15px;
}
.tab-close {
    flex: none;
}
.tab-sep {
    width: 1px;
    height: 20px;
    flex: none;
    background-color: #a888a8;
}
.tab-new {
    margin-left: 10px;
    flex: none;
}
.win-controls {
    margin-left: auto;
    display: flex;
}

/* toolbar */
.toolbar {
    height: 38px;
    flex: none;
    display: flex;
    align-items: center;
    padding-left: 6px;
    background-color: #020b26;
}
.nav-btns {
    display: flex;
    width: 138px;
    flex: none;
}
.addressbar {
    width: 1137px;
    height: 30px;
    flex: none;
    box-sizing: border-box;
    display: flex;
    align-items: center;
    padding: 0 4px 0 18px;
    border-radius: 15px;
    background-color: #14213f;
}
.addr-url {
    flex: 1;
    margin-left: 15px;
    font-size: 13px;
    letter-spacing: 0.04px;
    color: #8b909b;
    white-space: nowrap;
}
.addr-host {
    color: #fff;
}
.ext-btns {
    display: flex;
    align-items: center;
    margin-left: 6px;
}
.ext {
    width: 44px;
    height: 36px;
    display: flex;
    align-items: center;
    justify-content: center;
    flex: none;
}
.ext-b {
    font-family: "Open Sans", sans-serif;
    font-size: 10px;
    font-weight: 700;
    fill: #5b5fc7;
    text-anchor: middle;
}
.toolbar-sep {
    width: 1px;
    height: 20px;
    flex: none;
    background-color: #3a4258;
}
.toolbar-sep + .ext {
    margin-left: 4px;
}
.ext-dots {
    margin-left: 3px;
}
.avatar {
    width: 26px;
    height: 26px;
    border-radius: 50%;
    overflow: hidden;
    background: radial-gradient(circle at 50% 30%, #c8a58c, #8a6a5a);
}
.bing-btn {
    margin-left: 9px;
    display: flex;
}

/* below toolbar */
.workspace {
    flex: 1;
    min-height: 0;
    display: flex;
}
.main-col {
    flex: 1;
    min-width: 0;
    display: flex;
    flex-direction: column;
}
.bookmarks {
    height: 33px;
    flex: none;
    box-sizing: border-box;
    display: flex;
    align-items: center;
    padding: 0 0 3px 6px;
    background-color: #020b26;
    border-bottom: 1px solid #2c3040;
}
.bm {
    width: 32px;
    height: 20px;
    flex: none;
    display: flex;
    align-items: center;
    justify-content: center;
}
.bm svg {
    width: 16px;
    height: 16px;
}
.bm-txt {
    font-family: "Open Sans", sans-serif;
    font-weight: 700;
    text-anchor: middle;
    fill: #fff;
}
.bm-un {
    font-size: 9px;
}
.bm-k {
    font-size: 14px;
    fill: #1a8fb8;
}
.bm-h {
    font-size: 13px;
    fill: #3a4570;
}
.bm-s {
    font-size: 11px;
}
.bm-hh {
    font-size: 9px;
}
.bm-pdf {
    font-size: 5px;
}
.folder-item {
    display: flex;
    align-items: center;
    margin-right: 16.5px;
    font-size: 12px;
    letter-spacing: -0.3px;
    white-space: nowrap;
}
.folder-item svg {
    margin-right: 7px;
    flex: none;
}
.folder-first {
    margin-left: 9px;
}

/* the page in the browser */
.viewport {
    flex: 1;
    min-height: 0;
    display: flex;
    background-color: #202224;
}
.page {
    flex: 1;
    min-width: 0;
}
.scrollbar {
    width: 15px;
    flex: none;
    background-color: #1c1f20;
    padding-top: 146px;
    box-sizing: border-box;
}
.scroll-thumb {
    height: 160px;
    background-color: #434749;
}
.site-nav {
    height: 65px;
    box-sizing: border-box;
    display: flex;
    align-items: center;
    justify-content: center;
    gap: 24.5px;
    background-color: #1b1b1b;
    border-bottom: 1px solid #333536;
}
.site-nav a {
    font-family: "Open Sans", sans-serif;
    font-size: 11px;
    font-weight: 700;
    letter-spacing: 1.9px;
    color: #bab6ae;
    text-decoration: none;
}
.hero-edge {
    height: 12px;
    padding-left: 1265px;
    background-color: #1e1e1e;
}
.hero-shape {
    width: 230px;
    height: 12px;
    background: linear-gradient(90deg, #181818 0, #181818 44px, #121212 56px, #121212 100%);
    clip-path: polygon(18px 0, 222px 0, 230px 100%, 0 100%);
}
.about {
    height: 788px;
    box-sizing: border-box;
    display: flex;
    padding: 100px 0 0 370px;
    background-color: #1a1b1d;
}
.about-text {
    width: 540px;
    flex: none;
    margin-right: 170px;
}
.section-num {
    display: flex;
    align-items: center;
    height: 38px;
    font-family: "Open Sans", sans-serif;
    font-size: 18px;
    font-weight: 700;
    letter-spacing: 2px;
    color: #4d7cc4;
}
.section-dash {
    width: 30px;
    height: 2px;
    margin-right: 10px;
    background-color: #3a5aa8;
}
h2 {
    margin: 13px 0 59px;
    font-family: "Liberation Serif", serif;
    font-size: 54px;
    font-weight: 400;
    line-height: 50px;
    color: #c2bdb5;
}
p {
    margin: 0 0 10px;
    font-family: "Open Sans", sans-serif;
    font-size: 14px;
    line-height: 24px;
    color: #cbc7bf;
}
.about-pic {
    position: relative;
    width: 400px;
    height: 400px;
    flex: none;
    background-color: #000;
}
.logo {
    display: block;
}
.about-frame {
    position: absolute;
    left: -105px;
    top: 40px;
    width: 400px;
    height: 400px;
    box-sizing: border-box;
    border: 10px solid #304482;
}
.page-rest {
    height: 64px;
}

/* edge sidebar */
.sidebar {
    width: 55px;
    flex: none;
    box-sizing: border-box;
    display: flex;
    flex-direction: column;
    align-items: center;
    padding-bottom: 2px;
    background-color: #020b26;
    border-left: 1px solid #2c3040;
}
.side-btn {
    position: relative;
    width: 40px;
    height: 40.25px;
    flex: none;
    display: flex;
    align-items: center;
    justify-content: center;
}
.side-plus {
    margin-top: 3px;
}
.side-dot {
    position: absolute;
    right: 3px;
    top: 5px;
    width: 6px;
    height: 6px;
    border-radius: 50%;
    background-color: #f39a9a;
}
.side-bottom {
    margin-top: auto;
    display: flex;
    flex-direction: column;
    align-items: center;
}
.side-rule {
    width: 28px;
    height: 1px;
    margin-bottom: 2px;
    background-color: #2c3448;
}

/* windows taskbar */
.taskbar {
    height: 48px;
    flex: none;
    box-sizing: border-box;
    display: flex;
    align-items: center;
    padding: 0 0 2px 386px;
    background: linear-gradient(90deg, #1e1f22 0%, #22211f 40%, #2a2420 60%, #222222 85%, #1f2122 100%);
    border-top: 1px solid #3a3b3b;
}
.start {
    width: 44px;
    height: 44px;
    flex: none;
    margin-right: 3px;
    display: flex;
    align-items: center;
    justify-content: center;
}
.searchbox {
    width: 220px;
    height: 32px;
    flex: none;
    box-sizing: border-box;
    display: flex;
    align-items: center;
    padding: 0 3px 0 11px;
    border-radius: 16px;
    background-color: #373a3a;
    border: 1px solid #45484a;
}
.search-label {
    margin-left: 7px;
    font-size: 13px;
    color: #cfcfcf;
}
.search-art {
    margin-left: auto;
}
.task {
    position: relative;
    width: 44px;
    height: 44px;
    flex: none;
    display: flex;
    align-items: center;
    justify-content: center;
}
.searchbox + .task {
    margin-left: 2px;
}
.task-open {
    border-radius: 4px;
    background-color: #2a2b2c;
}
.task-pill {
    position: absolute;
    left: 14px;
    bottom: 1px;
    width: 16px;
    height: 3px;
    border-radius: 2px;
    background-color: #ee7f6a;
}
.task-dot {
    position: absolute;
    left: 19px;
    bottom: 1px;
    width: 6px;
    height: 3px;
    border-radius: 2px;
    background-color: #8a8a8a;
}
.badge {
    position: absolute;
    top: 5px;
    border-radius: 8px;
    background-color: #f0796a;
    color: #1a1010;
    font-size: 11px;
    line-height: 16px;
    height: 16px;
    text-align: center;
}
.badge-wide {
    left: 17px;
    width: 27px;
    border-radius: 6px;
}
.badge-num {
    left: 22px;
    width: 20px;
    height: 18px;
    line-height: 18px;
    border-radius: 50%;
}
.office-letter {
    font-family: "Open Sans", sans-serif;
    font-size: 10px;
    font-weight: 700;
    fill: #fff;
    text-anchor: middle;
}
.tray {
    margin-left: auto;
    padding-right: 19px;
    display: flex;
    align-items: center;
    flex: none;
}
.tray-btn {
    width: 32px;
    display: flex;
    justify-content: center;
    flex: none;
}
.tray-lang {
    width: 42px;
    flex: none;
    text-align: center;
    font-size: 12px;
    line-height: 16px;
    color: #eee;
}
.tray-sys {
    width: 24px;
    flex: none;
    display: flex;
    justify-content: center;
}
.tray-lang + .tray-sys {
    margin-left: 6px;
}
.tray-clock {
    width: 75px;
    flex: none;
    text-align: right;
    font-size: 12px;
    line-height: 16px;
    color: #eee;
}
.tray-notif {
    width: 18px;
    height: 18px;
    margin-left: 10px;
    flex: none;
    border-radius: 50%;
    background-color: #f0796a;
    color: #1a1010;
    font-size: 10px;
    line-height: 18px;
    text-align: center;
}
```
